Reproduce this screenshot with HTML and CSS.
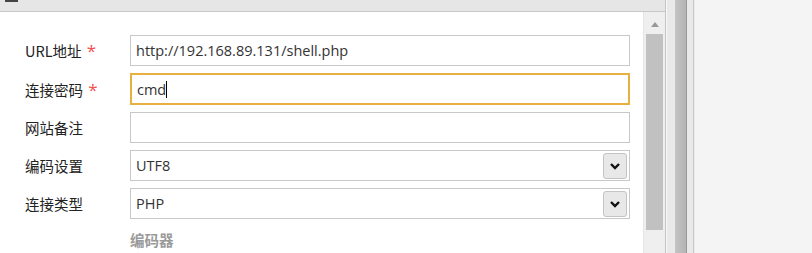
FILE: index.html
```html
<!DOCTYPE html>
<html lang="zh-CN">

<head>
    <meta charset="UTF-8">
    <meta name="viewport" content="width=device-width, initial-scale=1.0">
    <title>添加Shell</title>
    <link rel="stylesheet" href="styles.css">
</head>

<body>
    <div class="panel">
        <div class="panel-head">
            <span class="head-icon"></span>
        </div>
        <div class="panel-body">
            <div class="form">
                <div class="row">
                    <div class="label">URL地址 <span class="req">*</span></div>
                    <div class="field">http://192.168.89.131/shell.php</div>
                </div>
                <div class="row">
                    <div class="label">连接密码 <span class="req">*</span></div>
                    <div class="field focused">cmd<span class="caret"></span></div>
                </div>
                <div class="row">
                    <div class="label">网站备注</div>
                    <div class="field"></div>
                </div>
                <div class="row">
                    <div class="label">编码设置</div>
                    <div class="field select">
                        <span>UTF8</span>
                        <span class="drop">
                            <svg width="12" height="8" viewBox="0 0 12 8"><path d="M2 2 L6 6 L10 2" fill="none" stroke="#111" stroke-width="2.4"/></svg>
                        </span>
                    </div>
                </div>
                <div class="row">
                    <div class="label">连接类型</div>
                    <div class="field select">
                        <span>PHP</span>
                        <span class="drop">
                            <svg width="12" height="8" viewBox="0 0 12 8"><path d="M2 2 L6 6 L10 2" fill="none" stroke="#111" stroke-width="2.4"/></svg>
                        </span>
                    </div>
                </div>
                <div class="row">
                    <div class="label"></div>
                    <div class="section">编码器</div>
                </div>
            </div>
            <div class="scrollbar">
                <div class="arrow"></div>
                <div class="thumb"></div>
            </div>
        </div>
    </div>
    <div class="splitter">
        <div class="strip"></div>
        <div class="grip"></div>
        <div class="strip"></div>
    </div>
    <div class="side"></div>
</body>

</html>
```

FILE: styles.css
```css
body {
    margin: 0;
    padding: 0;
    display: flex;
    height: 253px;
    overflow: hidden;
    background-color: #f4f4f4;
    font-family: "Open Sans", "Noto Sans CJK SC", sans-serif;
    font-size: 14px;
    color: #222;
}

.panel {
    width: 665px;
    display: flex;
    flex-direction: column;
    border-right: 1px solid #c4c4c4;
}

.panel-head {
    height: 11px;
    background-color: #e6e6e6;
    border-bottom: 1px solid #c8c8c8;
    position: relative;
}

.head-icon {
    position: absolute;
    left: 5px;
    top: 0;
    width: 13px;
    height: 2px;
    background-color: #444;
}

.panel-body {
    flex: 1;
    display: flex;
    background-color: #fff;
}

.form {
    flex: 1;
    padding: 23px 0 0 25px;
    display: flex;
    flex-direction: column;
    gap: 7px;
}

.row {
    display: flex;
    align-items: center;
}

.label {
    width: 105px;
    font-family: "Noto Sans CJK SC", sans-serif;
    font-size: 14.5px;
    color: #222;
}

.req {
    color: #f05050;
    font-family: "Open Sans", sans-serif;
    font-size: 17px;
    margin-left: 2px;
}

.field {
    height: 29px;
    border: 1px solid #c8c8c8;
    padding: 0 5px;
    display: flex;
    align-items: center;
    font-family: "Open Sans", sans-serif;
    font-size: 14.5px;
    color: #333;
    width: 488px;
}

.field.focused {
    border: 2px solid #e8b040;
    height: 28px;
    width: 486px;
}

.caret {
    display: inline-block;
    width: 1px;
    height: 17px;
    background-color: #000;
}

.select {
    justify-content: space-between;
    padding-right: 2px;
    width: 491px;
}

.drop {
    width: 22px;
    height: 24px;
    border: 1px solid #c4c4c4;
    border-radius: 3px;
    background-color: #e8e8e8;
    display: flex;
    align-items: center;
    justify-content: center;
}

.section {
    margin-top: 3px;
    font-family: "Noto Sans CJK SC", sans-serif;
    font-size: 14.5px;
    font-weight: bold;
    color: #9a9a9a;
}

.scrollbar {
    width: 21px;
    background-color: #efefef;
    border-left: 1px solid #e4e4e4;
    display: flex;
    flex-direction: column;
    align-items: center;
    padding-top: 10px;
}

.arrow {
    width: 0;
    height: 0;
    border-left: 4px solid transparent;
    border-right: 4px solid transparent;
    border-bottom: 5px solid #999;
    margin-bottom: 7px;
}

.thumb {
    width: 17px;
    height: 196px;
    background-color: #c1c1c1;
}

.splitter {
    width: 28px;
    display: flex;
    background-color: #ececec;
    border-left: 1px solid #f8f8f8;
}

.strip {
    width: 8px;
    background-color: #e9e9e9;
}

.strip:last-child {
    width: 6px;
    border-right: 1px solid #c8c8c8;
}

.grip {
    width: 11px;
    background: linear-gradient(to right, #c4c4c4, #b4b4b4);
    border-right: 1px solid #989898;
}

.side {
    flex: 1;
    background-color: #f4f4f4;
}
```
